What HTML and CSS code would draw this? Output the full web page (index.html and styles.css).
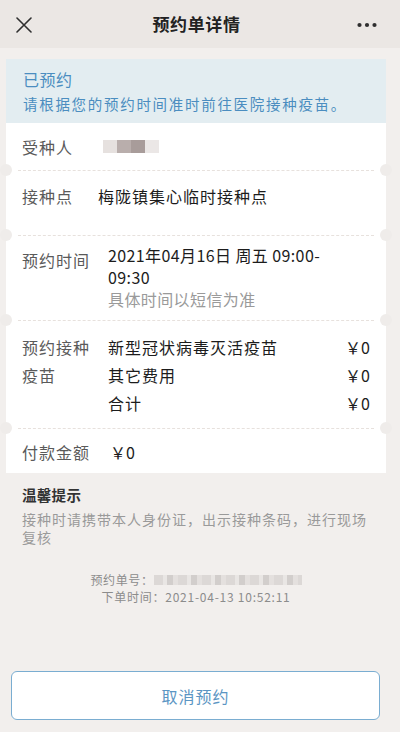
FILE: index.html
```html
<!DOCTYPE html>
<html lang="zh-CN">
<head>
<meta charset="utf-8">
<title>预约单详情</title>
<link rel="stylesheet" href="styles.css">
</head>
<body>
<div class="screen">
  <header class="topbar">
    <div class="topbar-inner">
      <svg class="icon-close" width="16" height="16" viewBox="0 0 16 16">
        <path d="M1 1 L15 15 M15 1 L1 15" stroke="#2f2f2f" stroke-width="1.6" fill="none" stroke-linecap="round"/>
      </svg>
      <h1 class="title">预约单详情</h1>
      <svg class="icon-more" width="20" height="6" viewBox="0 0 20 6">
        <circle cx="2.5" cy="3" r="2.1" fill="#2f2f2f"/>
        <circle cx="10" cy="3" r="2.1" fill="#2f2f2f"/>
        <circle cx="17.5" cy="3" r="2.1" fill="#2f2f2f"/>
      </svg>
    </div>
  </header>

  <main class="page">
    <section class="card">
      <div class="banner">
        <div class="banner-title">已预约</div>
        <div class="banner-sub">请根据您的预约时间准时前往医院接种疫苗。</div>
      </div>
      <div class="card-body">
        <div class="row row-person">
          <div class="label label-3">受种人</div>
          <div class="blur-name">
            <span class="bn bn-a"></span><span class="bn bn-b"></span><span class="bn bn-c"></span><span class="bn bn-d"></span>
          </div>
        </div>
        <div class="sep"></div>
        <div class="row row-site">
          <div class="label label-3">接种点</div>
          <div class="value">梅陇镇集心临时接种点</div>
        </div>
        <div class="sep"></div>
        <div class="row row-time">
          <div class="label label-4 label-low">预约时间</div>
          <div class="value value-time">
            <div class="tline">2021年04月16日 周五 09:00-</div>
            <div class="tline">09:30</div>
            <div class="tline muted">具体时间以短信为准</div>
          </div>
        </div>
        <div class="sep"></div>
        <div class="row row-vaccine">
          <div class="label label-4 label-wrap">预约接种疫苗</div>
          <div class="fees">
            <div class="fee"><span>新型冠状病毒灭活疫苗</span><span class="price">￥0</span></div>
            <div class="fee"><span>其它费用</span><span class="price">￥0</span></div>
            <div class="fee"><span>合计</span><span class="price">￥0</span></div>
          </div>
        </div>
        <div class="sep"></div>
        <div class="row row-pay">
          <div class="label label-4">付款金额</div>
          <div class="value value-pay">￥0</div>
        </div>
      </div>
    </section>

    <section class="tips">
      <h2 class="tips-title">温馨提示</h2>
      <p class="tips-text">接种时请携带本人身份证，出示接种条码，进行现场复核</p>
    </section>

    <section class="order-info">
      <div class="order-line order-no">预约单号：<span class="blur-no"></span></div>
      <div class="order-line order-time">下单时间：2021-04-13 10:52:11</div>
    </section>

    <footer class="footer">
      <button class="btn-cancel" type="button">取消预约</button>
    </footer>
  </main>
</div>
</body>
</html>
```

FILE: styles.css
```css
* {
  box-sizing: border-box;
  margin: 0;
  padding: 0;
}

html, body {
  width: 400px;
  height: 732px;
  background: #f2efed;
  overflow: hidden;
}

body {
  font-family: "Noto Sans CJK SC", "Noto Sans", "Liberation Sans", sans-serif;
  color: #2b2b2b;
}

.screen {
  display: flex;
  flex-direction: column;
  height: 732px;
}

.topbar {
  height: 48px;
  background: #ebe7e4;
  flex: none;
}

.topbar-inner {
  width: 390px;
  height: 48px;
  display: flex;
  align-items: center;
  justify-content: space-between;
  padding: 0 13px 0 16px;
}

.icon-close {
  display: block;
  margin-top: 2px;
}

.icon-more {
  display: block;
  margin-top: 1px;
}

.title {
  font-size: 17px;
  font-weight: 700;
  letter-spacing: 0.6px;
  color: #222;
  line-height: 24px;
  margin-left: 4px;
}

.page {
  width: 392px;
  flex: 1;
  display: flex;
  flex-direction: column;
}

.card {
  margin: 11px 0 0 6px;
  width: 380px;
}

.banner {
  background: #e3edf1;
  padding: 9px 16px 8px 17px;
  height: 64px;
}

.banner-title {
  font-size: 16px;
  line-height: 22px;
  color: #4b8dc0;
  letter-spacing: 0.5px;
}

.banner-sub {
  margin-top: 3px;
  font-size: 14.5px;
  line-height: 22px;
  color: #4b8dc0;
  letter-spacing: 1.7px;
  white-space: nowrap;
}

.card-body {
  background: #fff;
}

.row {
  display: flex;
  align-items: flex-start;
  padding: 0 16px;
  font-size: 16px;
  line-height: 22px;
  letter-spacing: 1px;
}

.label {
  color: #5a5a5a;
  flex: none;
}

.label-3 {
  width: 76px;
}

.label-4 {
  width: 86px;
}

.label-low {
  margin-top: 5px;
}

.label-wrap {
  width: 70px;
  margin-right: 16px;
  line-height: 28px;
}

.value {
  color: #1c1c1c;
}

.muted {
  color: #9a9a9a;
}

.row-person {
  padding-top: 13px;
  padding-bottom: 12px;
}

.row-site {
  padding-top: 14px;
  padding-bottom: 28px;
}

.row-time {
  padding-top: 8px;
  padding-bottom: 10px;
}

.value-time {
  letter-spacing: 0.4px;
}

.tline {
  height: 22px;
  line-height: 22px;
}

.row-vaccine {
  padding-top: 12px;
  padding-bottom: 11px;
}

.fees {
  flex: 1;
  line-height: 28px;
  color: #1c1c1c;
}

.fee {
  display: flex;
  justify-content: space-between;
}

.price {
  letter-spacing: 0;
}

.row-pay {
  padding-top: 12px;
  padding-bottom: 10px;
}

.value-pay {
  margin-left: 2px;
  letter-spacing: 0;
}

.blur-name {
  display: flex;
  margin-left: 5px;
  margin-top: 4px;
  height: 13px;
}

.bn {
  display: block;
  width: 14px;
  height: 13px;
}

.bn-a { background: #e6e1df; }
.bn-b { background: #b9aeac; }
.bn-c { background: #a89c9a; }
.bn-d { background: #ebe7e6; }

.sep {
  position: relative;
  height: 1px;
  margin: 0 12px;
  border-top: 1px dashed #e7e1dd;
}

.sep::before,
.sep::after {
  content: "";
  position: absolute;
  top: -7px;
  width: 12px;
  height: 12px;
  border-radius: 50%;
  background: #efecea;
}

.sep::before {
  left: -18px;
}

.sep::after {
  right: -18px;
}

.tips {
  padding: 0 16px 0 22px;
  margin-top: 11px;
}

.tips-title {
  font-size: 14.5px;
  line-height: 22px;
  font-weight: 700;
  color: #333;
  letter-spacing: 0.3px;
}

.tips-text {
  margin-top: 4px;
  font-size: 14px;
  line-height: 18px;
  color: #9a9a9a;
  letter-spacing: 1px;
}

.order-info {
  margin-top: 25px;
  display: flex;
  flex-direction: column;
  align-items: center;
  font-size: 12px;
  line-height: 17px;
  color: #8c8c8c;
}

.order-line {
  display: flex;
  align-items: center;
  white-space: nowrap;
}

.order-no {
  letter-spacing: 0.6px;
}

.order-time {
  letter-spacing: 0.75px;
}

.blur-no {
  display: inline-block;
  width: 148px;
  height: 10px;
  background: repeating-linear-gradient(90deg, #dcd8d6 0 9px, #e9e6e4 9px 13px, #d2cecc 13px 19px, #e4e0de 19px 24px);
}

.footer {
  margin-top: auto;
  padding: 0 0 12px 11px;
}

.btn-cancel {
  display: block;
  width: 369px;
  height: 49px;
  background: #fff;
  border: 1.5px solid #7aadd1;
  border-radius: 6px;
  font-family: "Noto Sans CJK SC", "Noto Sans", sans-serif;
  font-size: 16px;
  letter-spacing: 1px;
  color: #5b95c3;
}
```
